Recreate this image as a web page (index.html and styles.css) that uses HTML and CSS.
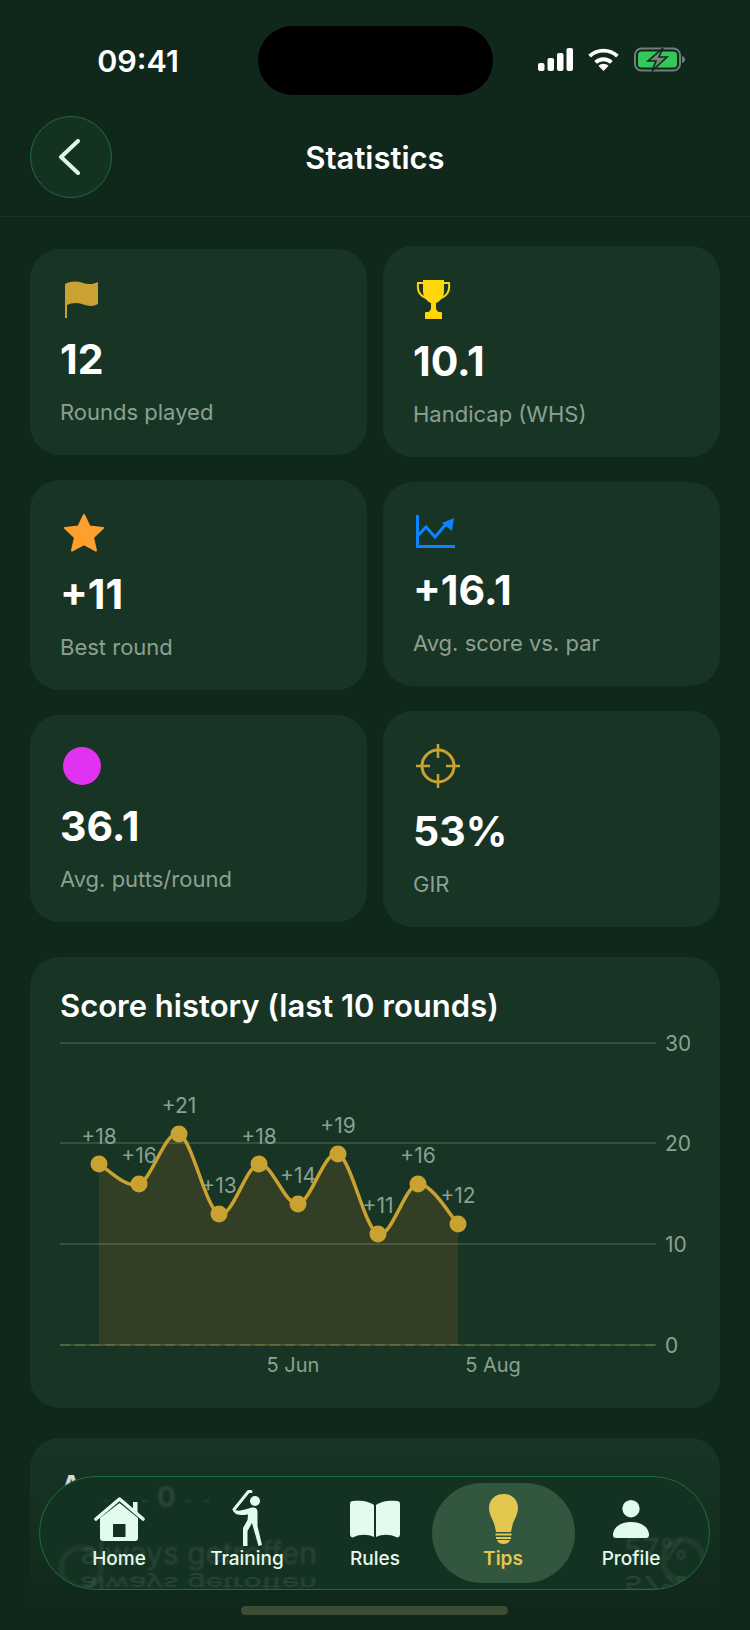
FILE: index.html
```html
<!DOCTYPE html>
<html lang="en">
<head>
    <meta charset="UTF-8">
    <meta name="viewport" content="width=device-width, initial-scale=1.0">
    <title>Statistics</title>
    <link rel="stylesheet" href="styles.css">
</head>
<body>
    <div class="phone">
        <div class="status-bar">
            <span class="time">09:41</span>
            <div class="island"></div>
            <div class="status-icons">
                <svg width="35" height="23" viewBox="0 0 35 23" fill="#fff">
                    <rect x="0" y="15" width="6.5" height="8" rx="2"/>
                    <rect x="9.5" y="10" width="6.5" height="13" rx="2"/>
                    <rect x="19" y="5" width="6.5" height="18" rx="2"/>
                    <rect x="28.5" y="0" width="6.5" height="23" rx="2"/>
                </svg>
                <svg width="31" height="23" viewBox="0 0 31 23" fill="none" stroke="#fff" stroke-width="3.8">
                    <path d="M1.6 8.2A20 20 0 0 1 29.4 8.2"/>
                    <path d="M7.6 14.4A11.5 11.5 0 0 1 23.4 14.4"/>
                    <path d="M15.5 23L10.4 17.8A7.4 7.4 0 0 1 20.6 17.8Z" fill="#fff" stroke="none"/>
                </svg>
                <svg width="51" height="25" viewBox="0 0 51 25">
                    <rect x="1" y="1.5" width="45" height="22" rx="6.5" fill="none" stroke="#6f8076" stroke-width="2"/>
                    <rect x="4" y="4.5" width="39" height="16" rx="3.5" fill="#34c759"/>
                    <path d="M48 9c2 .5 3 2 3 3.500s-1 3-3 3.500z" fill="#6f8076"/>
                    <path d="M29 1L14 14h8l-4 10 15-14h-8z" fill="#76877d" stroke="#10281b" stroke-width="1.6"/>
                </svg>
            </div>
        </div>

        <header class="top-bar">
            <button class="back-btn" type="button">
                <svg width="22" height="36" viewBox="0 0 22 36" fill="none" stroke="#dff7e8" stroke-width="4" stroke-linecap="round" stroke-linejoin="round">
                    <path d="M20 2L3 18l17 16"/>
                </svg>
            </button>
            <h1 class="page-title">Statistics</h1>
        </header>

        <main class="content">
            <div class="stat-columns">
                <div class="stat-col stat-col-left">
                    <div class="stat-card">
                        <div class="stat-icon icon-h40">
                            <svg width="35" height="37" viewBox="-2 0 35 37" fill="#c9a233">
                                <path d="M0 3C6 0 12 0 18 2C24 4 29 3 33 1V23C28 26 22 25 17 23C11 21 6 22 2 24V37H0Z"/>
                            </svg>
                        </div>
                        <div class="stat-value">12</div>
                        <div class="stat-label">Rounds played</div>
                    </div>
                    <div class="stat-card">
                        <div class="stat-icon icon-h44">
                            <svg width="42" height="39" viewBox="0 0 42 39" fill="#ff9f2e" stroke="#ff9f2e" stroke-width="2" stroke-linejoin="round">
                                <path d="M21 2L26.500 13.500L40 15L30 24.500L33 37.500L21 31L9 37.500L12 24.500L2 15L15.500 13.500Z"/>
                            </svg>
                        </div>
                        <div class="stat-value">+11</div>
                        <div class="stat-label">Best round</div>
                    </div>
                    <div class="stat-card">
                        <div class="stat-icon icon-h41">
                            <div class="putt-dot"></div>
                        </div>
                        <div class="stat-value">36.1</div>
                        <div class="stat-label">Avg. putts/round</div>
                    </div>
                </div>

                <div class="stat-col">
                    <div class="stat-card">
                        <div class="stat-icon icon-h45">
                            <svg width="35" height="40" viewBox="0 0 35 40">
                                <path d="M8 4H2C1 12 4 17 10 19M27 4H33C34 12 31 17 25 19" fill="none" stroke="#ffd60a" stroke-width="2"/>
                                <path d="M7 1H28V12C28 19 23 23 20 24V31H15V24C12 23 7 19 7 12Z" fill="#ffd60a"/>
                                <path d="M15 29h5c0 2 2 4 3 4h2a1 1 0 0 1 1 1v6H9v-6a1 1 0 0 1 1-1h2c1 0 3-2 3-4z" fill="#ffd60a"/>
                            </svg>
                        </div>
                        <div class="stat-value">10.1</div>
                        <div class="stat-label">Handicap (WHS)</div>
                    </div>
                    <div class="stat-card">
                        <div class="stat-icon icon-h38">
                            <svg width="39" height="33" viewBox="0 0 39 33" fill="none" stroke="#0a84ff" stroke-width="3">
                                <path d="M1.500 0V31.500H39"/>
                                <path d="M1.500 21L10 12L19 22L31 8"/>
                                <path d="M38 3L36 16L26 8Z" fill="#0a84ff" stroke="none"/>
                            </svg>
                        </div>
                        <div class="stat-value">+16.1</div>
                        <div class="stat-label">Avg. score vs. par</div>
                    </div>
                    <div class="stat-card">
                        <div class="stat-icon icon-h50">
                            <svg width="44" height="44" viewBox="0 0 44 44" fill="none" stroke="#c9a233" stroke-width="3">
                                <circle cx="22" cy="22" r="16"/>
                                <path d="M22 0V14M22 30V44M0 22H14M30 22H44" stroke-width="2.500"/>
                            </svg>
                        </div>
                        <div class="stat-value">53%</div>
                        <div class="stat-label">GIR</div>
                    </div>
                </div>
            </div>

            <section class="chart-card">
                <h2 class="card-title">Score history (last 10 rounds)</h2>
                <svg class="score-chart" width="630" height="350" viewBox="0 0 630 350">
                    <g class="grid-lines">
                        <line x1="0" y1="13" x2="596" y2="13"/>
                        <line x1="0" y1="113" x2="596" y2="113"/>
                        <line x1="0" y1="214" x2="596" y2="214"/>
                        <line x1="0" y1="315" x2="596" y2="315"/>
                    </g>
                    <line class="base-dash" x1="0" y1="315" x2="596" y2="315"/>
                    <path class="score-area" d="M39 134C45.700 137.300 65.700 159 79 154C92.300 149 105.700 99 119 104C132.300 109 145.700 179 159 184C172.300 189 185.700 135.700 199 134C212 132.300 225 175.700 238 174C251 172.300 264.700 119 278 124C291.300 129 304.700 199 318 204C331.300 209 344.700 155.700 358 154C371.300 152.300 391.300 187.300 398 194L398 315L39 315Z"/>
                    <path class="score-line" d="M39 134C45.700 137.300 65.700 159 79 154C92.300 149 105.700 99 119 104C132.300 109 145.700 179 159 184C172.300 189 185.700 135.700 199 134C212 132.300 225 175.700 238 174C251 172.300 264.700 119 278 124C291.300 129 304.700 199 318 204C331.300 209 344.700 155.700 358 154C371.300 152.300 391.300 187.300 398 194"/>
                    <g class="score-dots">
                        <circle cx="39" cy="134" r="8.500"/>
                        <circle cx="79" cy="154" r="8.500"/>
                        <circle cx="119" cy="104" r="8.500"/>
                        <circle cx="159" cy="184" r="8.500"/>
                        <circle cx="199" cy="134" r="8.500"/>
                        <circle cx="238" cy="174" r="8.500"/>
                        <circle cx="278" cy="124" r="8.500"/>
                        <circle cx="318" cy="204" r="8.500"/>
                        <circle cx="358" cy="154" r="8.500"/>
                        <circle cx="398" cy="194" r="8.500"/>
                    </g>
                    <g class="chart-text score-labels">
                        <text x="39" y="114">+18</text>
                        <text x="79" y="133">+16</text>
                        <text x="119" y="83">+21</text>
                        <text x="159" y="163">+13</text>
                        <text x="199" y="114">+18</text>
                        <text x="238" y="153">+14</text>
                        <text x="278" y="103">+19</text>
                        <text x="318" y="183">+11</text>
                        <text x="358" y="133">+16</text>
                        <text x="398" y="173">+12</text>
                    </g>
                    <g class="chart-text axis-labels">
                        <text x="605" y="21">30</text>
                        <text x="605" y="121">20</text>
                        <text x="605" y="222">10</text>
                        <text x="605" y="323">0</text>
                    </g>
                    <g class="chart-text date-labels">
                        <text x="233" y="342">5 Jun</text>
                        <text x="433" y="342">5 Aug</text>
                    </g>
                </svg>
            </section>

            <section class="next-card">
                <h2 class="card-title">Accuracy</h2>
            </section>
        </main>

        <div class="bottom-fade"></div>

        <nav class="tab-bar">
            <div class="ghost ghost-score">- - -<b>0</b>- -</div>
            <div class="ghost ghost-text">always getroffen</div>
            <div class="ghost ghost-text ghost-flip">always getroffen</div>
            <div class="ghost ghost-pct">57%</div>
            <div class="ghost ghost-pct ghost-flip-pct">57%</div>
            <div class="ghost ghost-ring ghost-ring-left"></div>
            <div class="ghost ghost-ring ghost-ring-right"></div>

            <a class="tab">
                <span class="tab-icon">
                    <svg width="51" height="44" viewBox="0 0 51 44">
                        <path d="M2 22L25.500 2L49 22" fill="none" stroke="#e2fbec" stroke-width="3.600" stroke-linecap="round" stroke-linejoin="round"/>
                        <rect x="39" y="5" width="4.500" height="11" fill="#e2fbec"/>
                        <path fill-rule="evenodd" d="M6 21L25.500 6L44 21V41a3 3 0 0 1-3 3H9a3 3 0 0 1-3-3ZM19 27V40H31.500V27Z" fill="#e2fbec"/>
                    </svg>
                </span>
                <span class="tab-label">Home</span>
            </a>
            <a class="tab">
                <span class="tab-icon">
                    <svg width="30" height="57" viewBox="0 0 30 57" fill="#e2fbec">
                        <circle cx="23" cy="11" r="5"/>
                        <path d="M19 1.500H16.500L2 19.500" fill="none" stroke="#e2fbec" stroke-width="3" stroke-linecap="round" stroke-linejoin="round"/>
                        <path d="M1 21L4 24C10 26 15 24.500 16 24.500L15.500 30L11 38V56H15.500V41L20 33L26.500 56L30 55L25.500 36V22C25.500 18 23 17 20 17.500C14 19 7 22 4 20Z"/>
                    </svg>
                </span>
                <span class="tab-label">Training</span>
            </a>
            <a class="tab">
                <span class="tab-icon">
                    <svg width="50" height="38" viewBox="0 0 50 38" fill="#e2fbec">
                        <path d="M24 5C19 1 10 0 3 1C1 1 0 2 0 4V34C0 37 2 38 4 37C10 34 18 34 24 37Z"/>
                        <path d="M26 5C31 1 40 0 47 1C49 1 50 2 50 4V34C50 37 48 38 46 37C40 34 32 34 26 37Z"/>
                    </svg>
                </span>
                <span class="tab-label">Rules</span>
            </a>
            <a class="tab tab-active">
                <span class="tab-icon">
                    <svg width="29" height="50" viewBox="0 0 29 50" fill="#e3c84f">
                        <path d="M14.500 0C6 0 0 6 0 14C0 20 4 26 5.500 31L7 38H22L23.500 31C25 26 29 20 29 14C29 6 23 0 14.500 0Z"/>
                        <rect x="6.500" y="39.500" width="16" height="2"/>
                        <rect x="7" y="43" width="15" height="2"/>
                        <path d="M8 46H21C20 49 17 50 14.500 50C12 50 9 49 8 46Z"/>
                    </svg>
                </span>
                <span class="tab-label">Tips</span>
            </a>
            <a class="tab">
                <span class="tab-icon">
                    <svg width="36" height="38" viewBox="0 0 36 38" fill="#e2fbec">
                        <circle cx="18" cy="8.700" r="8.700"/>
                        <path d="M0 35C0 27 8 22 18 22C28 22 36 27 36 35C36 37 35 38 33 38H3C1 38 0 37 0 35Z"/>
                    </svg>
                </span>
                <span class="tab-label">Profile</span>
            </a>
        </nav>

        <div class="home-indicator"></div>
    </div>
</body>
</html>
```

FILE: styles.css
```css
* {
    box-sizing: border-box;
}
html, body {
    margin: 0;
    padding: 0;
}
body {
    font-family: Inter, "Liberation Sans", sans-serif;
    background: #10281b;
    color: #ffffff;
}
.phone {
    position: relative;
    width: 750px;
    height: 1630px;
    overflow: hidden;
    background: #10281b;
}

/* status bar */
.status-bar {
    display: grid;
    grid-template-columns: 258px 235px 1fr;
    height: 95px;
    padding-top: 26px;
}
.time {
    padding-left: 18px;
    text-align: center;
    font-size: 30.5px;
    font-weight: 600;
    line-height: 70px;
}
.island {
    height: 69px;
    background: #000000;
    border-radius: 35px;
}
.status-icons {
    display: flex;
    align-items: center;
    gap: 15px;
    padding-left: 45px;
    height: 70px;
    margin-top: -2px;
}

/* header */
.top-bar {
    display: grid;
    grid-template-columns: 82px 1fr 82px;
    align-items: center;
    height: 122px;
    padding: 21px 30px 18px;
    border-bottom: 1px solid #1a3526;
}
.back-btn {
    display: flex;
    align-items: center;
    justify-content: center;
    width: 82px;
    height: 82px;
    padding: 0 4px 0 0;
    background: #133320;
    border: 1.5px solid #1f6b3c;
    border-radius: 50%;
}
.page-title {
    margin: 0;
    text-align: center;
    font-size: 31px;
    font-weight: 600;
}

/* stat cards */
.content {
    padding: 29px 30px 0;
}
.stat-columns {
    display: flex;
    gap: 16px;
}
.stat-col {
    flex: 1;
    display: flex;
    flex-direction: column;
    gap: 25px;
}
.stat-col-left {
    padding-top: 3px;
}
.stat-card {
    padding: 30px 30px 29px;
    background: #183424;
    border-radius: 30px;
}
.stat-icon {
    display: flex;
    align-items: center;
    margin-left: 3px;
    margin-bottom: 16px;
}
.icon-h38 { height: 38px; }
.icon-h40 { height: 40px; }
.icon-h41 { height: 41px; }
.icon-h44 { height: 44px; }
.icon-h45 { height: 45px; }
.icon-h50 { height: 50px; }
.stat-card .stat-icon svg {
    display: block;
}
.putt-dot {
    width: 38px;
    height: 38px;
    background: #e032f0;
    border-radius: 50%;
}
.stat-value {
    font-size: 41px;
    font-weight: 700;
    line-height: 48px;
}
.stat-label {
    margin-top: 15px;
    font-size: 22px;
    line-height: 28px;
    color: #8ca092;
}

/* chart */
.chart-card {
    margin-top: 30px;
    padding: 30px 30px 28px;
    background: #183424;
    border-radius: 30px;
}
.card-title {
    margin: 0 0 5px;
    font-size: 31px;
    font-weight: 600;
    line-height: 38px;
}
.score-chart {
    display: block;
}
.grid-lines line {
    stroke: #3f5a48;
    stroke-width: 1.5;
}
.base-dash {
    stroke: #5f6b38;
    stroke-width: 1.5;
    stroke-dasharray: 10 5;
}
.score-area {
    fill: rgba(230, 140, 36, 0.13);
}
.score-line {
    fill: none;
    stroke: #c9a232;
    stroke-width: 3.5;
}
.score-dots circle {
    fill: #c9a232;
}
.chart-text text {
    font-family: Inter, "Liberation Sans", sans-serif;
    font-size: 21px;
    fill: #8ca092;
}
.score-labels text,
.date-labels text {
    text-anchor: middle;
}
.date-labels text {
    font-size: 20px;
}

.next-card {
    margin-top: 30px;
    height: 260px;
    padding: 30px;
    background: #183424;
    border-radius: 30px;
}

/* bottom bar */
.bottom-fade {
    position: absolute;
    left: 0;
    right: 0;
    bottom: 0;
    height: 190px;
    background: linear-gradient(to bottom, rgba(16, 40, 27, 0) 0%, rgba(16, 40, 27, 0.4) 45%, #10281b 85%);
}
.tab-bar {
    position: absolute;
    left: 39px;
    top: 1476px;
    display: flex;
    width: 671px;
    height: 114px;
    padding: 6px 15px;
    overflow: hidden;
    background: #143222;
    border: 1.5px solid #1f6b3c;
    border-radius: 57px;
}
.tab {
    position: relative;
    flex: none;
    display: flex;
    flex-direction: column;
    align-items: center;
    width: 128px;
    height: 100px;
    padding-top: 7px;
    border-radius: 50px;
}
.tab-active {
    width: 143px;
    margin: 0 -7.5px;
    background: #33563f;
}
.tab-icon {
    display: flex;
    align-items: center;
    justify-content: center;
    height: 57px;
}
.tab-label {
    margin-top: 1px;
    font-size: 19px;
    font-weight: 500;
    line-height: 22px;
    color: #e6f8ec;
}
.tab-active .tab-label {
    font-weight: 600;
    color: #e3c84f;
}

/* content showing through the glass bar */
.ghost {
    position: absolute;
    color: rgba(255, 255, 255, 0.1);
    filter: blur(0.8px);
    white-space: nowrap;
}
.ghost-score {
    left: 62px;
    top: 3px;
    font-size: 18px;
    letter-spacing: 3px;
}
.ghost-score b {
    font-size: 28px;
    margin: 0 5px;
}
.ghost-text {
    left: 41px;
    top: 58px;
    font-size: 30px;
    line-height: 36px;
}
.ghost-flip {
    top: 89px;
    transform: scaleY(-0.6);
}
.ghost-pct {
    left: 584px;
    top: 54px;
    font-size: 30px;
    line-height: 36px;
}
.ghost-flip-pct {
    top: 88px;
    transform: scaleY(-0.6);
}
.ghost-ring {
    width: 46px;
    height: 46px;
    border: 6px solid rgba(255, 255, 255, 0.05);
    border-radius: 50%;
}
.ghost-ring-left {
    left: 18px;
    top: 68px;
}
.ghost-ring-right {
    left: 620px;
    top: 60px;
}
.home-indicator {
    position: absolute;
    left: 241px;
    top: 1606px;
    width: 267px;
    height: 9px;
    background: #3c4d33;
    border-radius: 5px;
}
```
